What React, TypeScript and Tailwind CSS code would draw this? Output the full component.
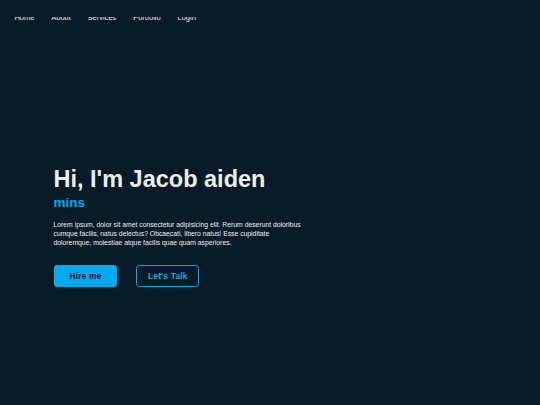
import React from "react";

export default function App() {
  const nav = ["Home", "About", "Services", "Portfolio", "Login"];
  return (
    <div
      className="relative w-full h-[405px] bg-[#081b29] text-[#ededed] overflow-hidden"
      style={{ fontFamily: '"Liberation Sans", Arial, sans-serif' }}
    >
      <header className="relative pt-[14.3px] pl-[14.4px]">
        <nav className="flex gap-[16.8px] text-[7.5px] leading-none text-[#ededed]">
          {nav.map((n) => (
            <a key={n} href="#" className="block">
              {n}
            </a>
          ))}
        </nav>
        <div className="absolute left-0 right-0 top-0 h-[17px] bg-[#081b29]" />
      </header>
      <section className="pl-[53.5px] pt-[146px]">
        <h1 className="text-[23.5px] font-bold leading-none text-[#ededed]">
          Hi, I'm Jacob aiden
        </h1>
        <h3 className="mt-[4.7px] text-[13.5px] font-bold leading-none text-[#00abf0]">
          mins
        </h3>
        <p className="mt-[11.8px] w-[254px] text-[6.8px] leading-[8.7px] text-[#ededed]">
          Lorem ipsum, dolor sit amet consectetur adipisicing elit. Rerum deserunt doloribus
          cumque facilis, natus delectus? Obcaecati, libero natus! Esse cupiditate
          doloremque, molestiae atque facilis quae quam asperiores.
        </p>
        <div className="mt-[17.3px] ml-[0.5px] flex gap-[19.3px]">
          <a
            href="#"
            className="flex h-[22.7px] w-[63px] items-center justify-center rounded-[3.4px] bg-[#00abf0] text-[8.4px] font-bold tracking-[0.2px] text-[#081b29]"
          >
            Hire me
          </a>
          <a
            href="#"
            className="flex h-[22.7px] w-[63px] items-center justify-center rounded-[3.4px] border border-[#00abf0] text-[8.4px] font-bold tracking-[0.2px] text-[#00abf0]"
          >
            Let's Talk
          </a>
        </div>
      </section>
    </div>
  );
}
